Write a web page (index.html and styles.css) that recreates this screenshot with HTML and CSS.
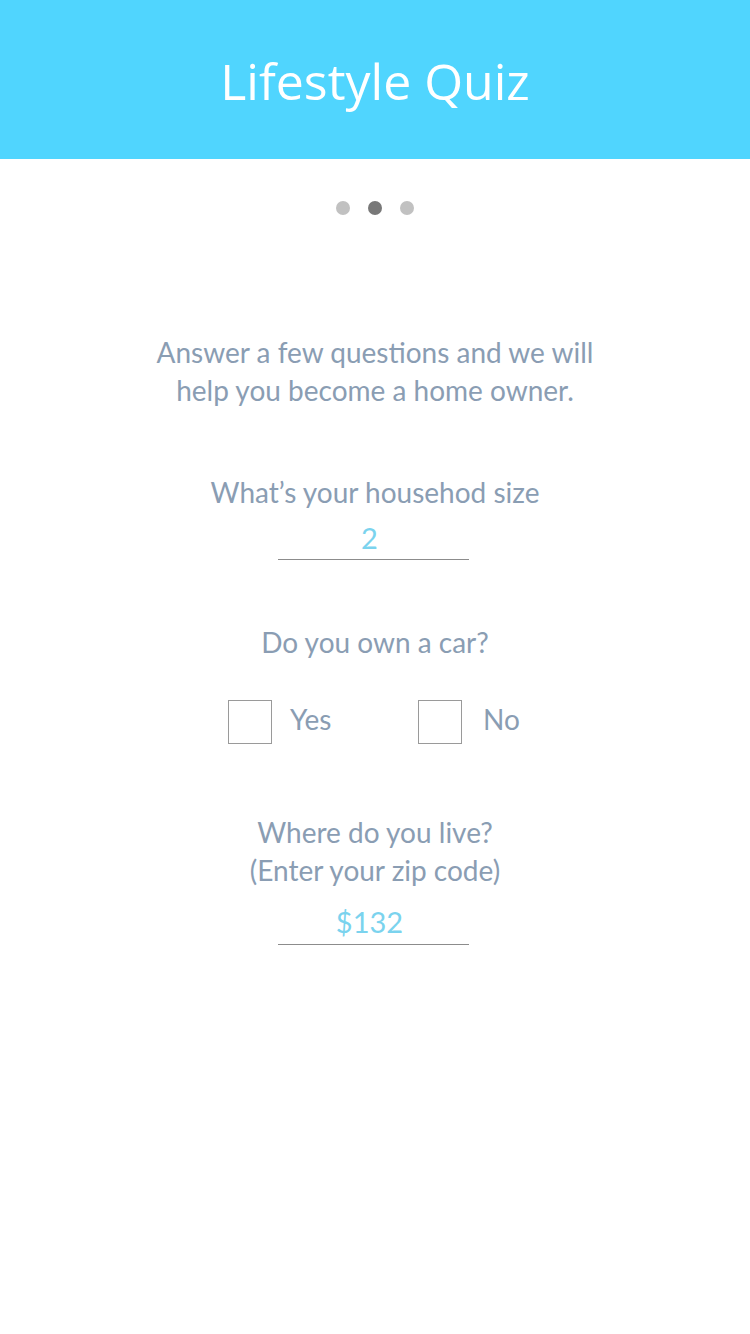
FILE: index.html
```html
<!DOCTYPE html>
<html>
<head>
<meta charset="utf-8">
<link rel="stylesheet" href="styles.css">
</head>
<body>
<header class="header"><h1 class="title">Lifestyle Quiz</h1></header>
<div class="dots"><span class="dot"></span><span class="dot active"></span><span class="dot"></span></div>
<main class="content">
  <p class="intro">Answer a few questions and we will<br>help you become a home owner.</p>
  <section class="question q1">
    <p class="label">What’s your househod size</p>
    <div class="field">2</div>
  </section>
  <section class="question q2">
    <p class="label">Do you own a car?</p>
    <div class="choices">
      <label class="choice yes"><span class="box"></span><span class="choice-text">Yes</span></label>
      <label class="choice no"><span class="box"></span><span class="choice-text">No</span></label>
    </div>
  </section>
  <section class="question q3">
    <p class="label">Where do you live?<br>(Enter your zip code)</p>
    <div class="field">$132</div>
  </section>
</main>
</body>
</html>
```
FILE: styles.css
```css
* { box-sizing: border-box; }
html, body { margin: 0; padding: 0; background: #fff; }
body { width: 750px; height: 1334px; font-family: "Lato", "Open Sans", sans-serif; color: #8a9db3; }
.header { height: 159px; background: #50d5fe; display: flex; align-items: center; justify-content: center; }
.title { margin: 0; font-family: "Open Sans", sans-serif; font-weight: 400; font-size: 50px; color: #fff; line-height: 1; position: relative; top: 1px; }
.dots { display: flex; justify-content: center; gap: 18px; margin-top: 42px; }
.dot { width: 14px; height: 14px; border-radius: 50%; background: #c1c1c1; }
.dot.active { background: #787878; }
.content { display: flex; flex-direction: column; align-items: center; text-align: center; }
.intro { margin: 118px 0 0; font-size: 28px; line-height: 38px; }
.question { display: flex; flex-direction: column; align-items: center; }
.label { margin: 0; font-size: 28px; line-height: 38px; }
.q1 { margin-top: 64px; }
.field { width: 191px; margin-right: 3px; border-bottom: 1px solid #8c8c8c; color: #7bd3ee; font-size: 29px; line-height: 43px; padding-right: 8px; margin-top: 5px; padding-bottom: 0; }
.q2 { margin-top: 63px; }
.choices { display: flex; margin-top: 39px; margin-right: 2px; }
.choice { display: flex; align-items: center; flex: none; width: 190px; }
.choice.no { width: 102px; }
.box { flex: none; width: 44px; height: 44px; border: 1px solid #9a9a9a; }
.choice-text { margin-left: 18px; margin-bottom: 6px; font-size: 28px; white-space: nowrap; }
.choice.no .choice-text { margin-left: 21px; }
.q3 { margin-top: 69px; }
.q3 .field { margin-top: 11px; padding-bottom: 1px; }
```
